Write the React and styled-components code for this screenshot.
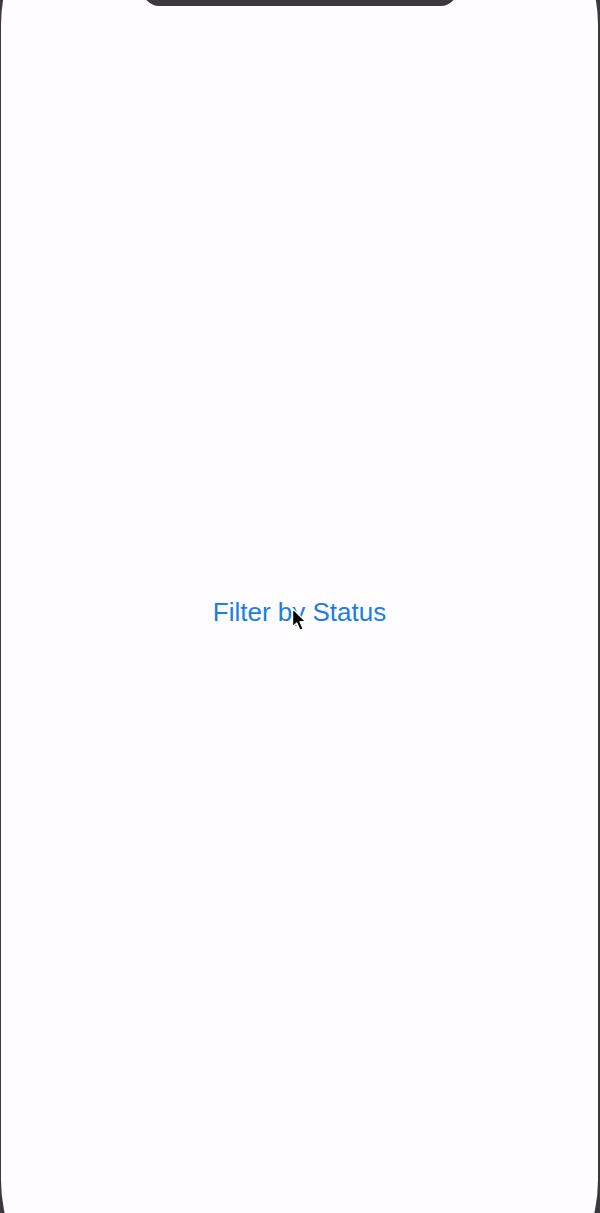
import React from 'react';
import styled, { createGlobalStyle } from 'styled-components';

const GlobalStyle = createGlobalStyle`
  html, body {
    margin: 0;
    padding: 0;
    background: #3a393c;
  }
  body {
    font-family: "Liberation Sans", Arial, sans-serif;
  }
`;

const Frame = styled.div`
  position: relative;
  width: 600px;
  height: 1213px;
  overflow: hidden;
  background: #3a393c;
`;

const Screen = styled.div`
  margin: -125px 2px 0 1px;
  height: 1455px;
  border-radius: 150px;
  background: #fffdff;
  display: flex;
  flex-direction: column;
  align-items: center;
  padding-top: 722px;
  box-sizing: border-box;
`;

const Notch = styled.div`
  position: absolute;
  top: -16px;
  left: 143px;
  width: 314px;
  height: 22px;
  border-radius: 0 0 16px 16px;
  background: #3a393c;
`;

const FilterButton = styled.button`
  position: relative;
  border: none;
  background: none;
  padding: 0;
  font-family: "Liberation Sans", Arial, sans-serif;
  font-size: 26px;
  line-height: 30px;
  color: #1a7fe3;
  cursor: pointer;
`;

const Cursor = styled.svg`
  position: absolute;
  left: 78px;
  top: 10px;
  width: 17px;
  height: 26px;
`;

export default function App() {
  return (
    <>
      <GlobalStyle />
      <Frame>
        <Screen>
          <FilterButton>
            Filter by Status
            <Cursor viewBox="0 0 17 26">
              <path
                d="M1.5 1.5 L1.5 20 L5.8 16 L9 23.5 L12.2 22.1 L9.1 14.8 L14.8 14.8 Z"
                fill="#000"
                stroke="#fff"
                strokeWidth="1.4"
                strokeLinejoin="round"
              />
            </Cursor>
          </FilterButton>
        </Screen>
        <Notch />
      </Frame>
    </>
  );
}
